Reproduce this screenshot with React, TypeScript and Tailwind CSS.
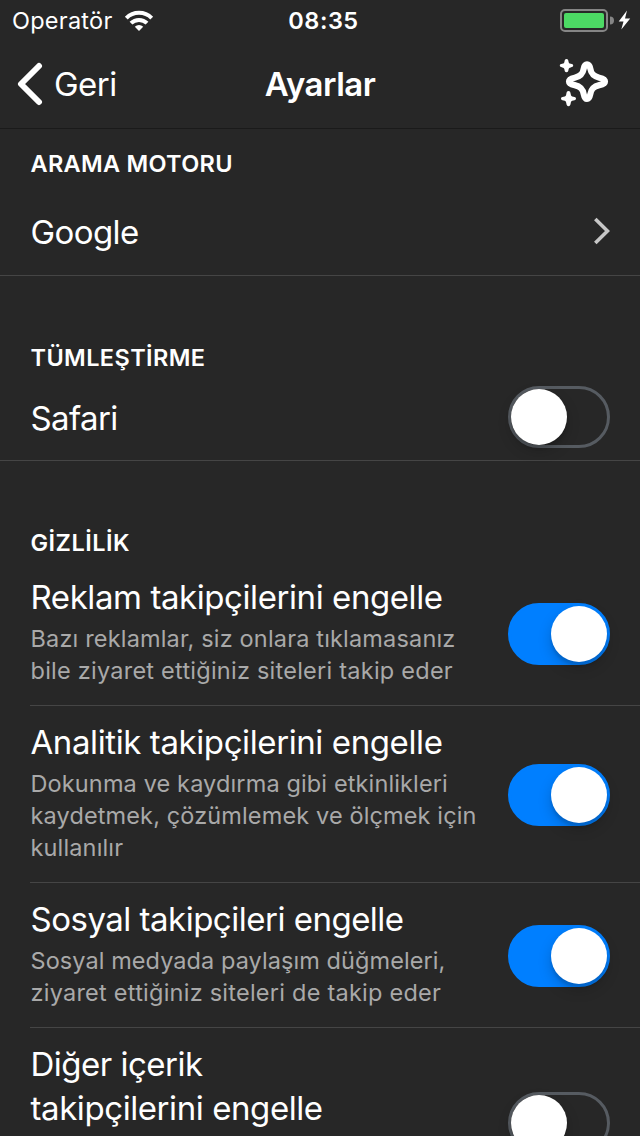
import { useState } from 'react';

function Toggle({ initial, label }: { initial: boolean; label: string }) {
  const [on, setOn] = useState(initial);
  return (
    <button
      type="button"
      role="switch"
      aria-checked={on}
      aria-label={label}
      onClick={() => setOn(!on)}
      className={`flex h-[62px] w-[102px] shrink-0 items-center rounded-full border-[3px] ${
        on ? 'justify-end border-[#007fff] bg-[#007fff]' : 'justify-start border-[#565b61]'
      }`}
    >
      <span className="size-14 rounded-full bg-white shadow-[0_6px_14px_rgba(0,0,0,0.18),0_4px_3px_rgba(0,0,0,0.1)]" />
    </button>
  );
}

function SectionTitle({ text, className }: { text: string; className: string }) {
  return <h2 className={`h-8 text-[23.5px] leading-8 font-semibold ${className}`}>{text}</h2>;
}

type Line = { text: string; tracking: string };
type PrivacyItem = { title: Line[]; description: Line[]; on: boolean };

const privacyItems: PrivacyItem[] = [
  {
    title: [{ text: 'Reklam takipçilerini engelle', tracking: 'tracking-[-0.42px]' }],
    description: [
      { text: 'Bazı reklamlar, siz onlara tıklamasanız', tracking: 'tracking-[0.17px]' },
      { text: 'bile ziyaret ettiğiniz siteleri takip eder', tracking: 'tracking-[0.24px]' },
    ],
    on: true,
  },
  {
    title: [{ text: 'Analitik takipçilerini engelle', tracking: 'tracking-[-0.4px]' }],
    description: [
      { text: 'Dokunma ve kaydırma gibi etkinlikleri', tracking: 'tracking-[0.13px]' },
      { text: 'kaydetmek, çözümlemek ve ölçmek için', tracking: 'tracking-[0.13px]' },
      { text: 'kullanılır', tracking: 'tracking-[0.15px]' },
    ],
    on: true,
  },
  {
    title: [{ text: 'Sosyal takipçileri engelle', tracking: 'tracking-[-0.5px]' }],
    description: [
      { text: 'Sosyal medyada paylaşım düğmeleri,', tracking: 'tracking-[0.07px]' },
      { text: 'ziyaret ettiğiniz siteleri de takip eder', tracking: 'tracking-[0.24px]' },
    ],
    on: true,
  },
  {
    title: [
      { text: 'Diğer içerik', tracking: 'tracking-[-0.5px]' },
      { text: 'takipçilerini engelle', tracking: 'tracking-[-0.42px]' },
    ],
    description: [],
    on: false,
  },
];

function PrivacyRow({ item }: { item: PrivacyItem }) {
  const last = item.description.length === 0;
  return (
    <li
      className={`ml-[30px] flex justify-between pr-[30px] ${
        last ? 'items-start' : 'items-center border-b border-[#454545]'
      }`}
    >
      <div className="pt-[14px] pb-[18px] pl-[0.5px] whitespace-nowrap">
        {item.title.map((line) => (
          <p key={line.text} className={`text-[33px] leading-[44px] ${line.tracking}`}>{line.text}</p>
        ))}
        <div className="mt-1 text-[23.5px] leading-8 text-[#a9a9a9]">
          {item.description.map((line) => (
            <p key={line.text} className={line.tracking}>{line.text}</p>
          ))}
        </div>
      </div>
      <div className={last ? 'pt-16' : 'pt-0.5'}>
        <Toggle initial={item.on} label={item.title.map((line) => line.text).join(' ')} />
      </div>
    </li>
  );
}

export default function App() {
  return (
    <div className="h-[1136px] w-[640px] overflow-hidden bg-[#272727] font-['Inter',sans-serif] text-white">
      <div className="grid h-[42px] grid-cols-[1fr_auto_1fr] items-center pr-2 pl-3">
        <div className="flex items-center gap-[11px]">
          <span className="text-[23.5px] leading-10 tracking-[0.25px]">Operatör</span>
          <svg width="30" height="22" viewBox="0 0 30 22" fill="none" stroke="white" strokeWidth="4">
            <path d="M2.3 8.1a18 18 0 0 1 25.4 0" />
            <path d="M7 13.2a11.3 11.3 0 0 1 16 0" />
            <path d="M15 21l-4.2-4.2a6 6 0 0 1 8.4 0z" fill="white" stroke="none" />
          </svg>
        </div>
        <span className="pl-[3px] text-center text-[23.5px] leading-10 font-semibold tracking-[0.5px]">08:35</span>
        <svg className="justify-self-end" width="72" height="24" viewBox="0 0 72 24">
          <rect x="1" y="1" width="46" height="21" rx="4" fill="none" stroke="#858585" strokeWidth="2" />
          <rect x="4" y="4" width="40" height="15" rx="2" fill="#4cd964" />
          <path d="M50 7.6a4 4 0 0 1 0 8z" fill="#858585" />
          <path d="M67 1.5L58.7 12.5h4.8L61.3 20.5 70.2 9.6h-5.2z" fill="white" />
        </svg>
      </div>

      <header className="grid h-[87px] grid-cols-[1fr_auto_1fr] items-center border-b border-[#1a1a1a] pr-[31px] pb-0.5 pl-[17px]">
        <button type="button" className="flex items-center gap-[11px] text-left">
          <svg width="26" height="44" viewBox="0 0 26 44" fill="none" stroke="white" strokeWidth="6" strokeLinecap="round" strokeLinejoin="round">
            <path d="M22 4L4 22l18 18" />
          </svg>
          <span className="text-[33px] leading-[44px] tracking-[-0.5px]">Geri</span>
        </button>
        <h1 className="pl-[14px] text-[33px] leading-[44px] font-semibold tracking-[-0.5px]">Ayarlar</h1>
        <svg className="justify-self-end" width="50" height="50" viewBox="0 0 50 50" fill="none">
          <path
            d="M28 5c-2 0-2.7 1.4-3.2 4-.9 5.2-2.8 8-9.1 9.4-3.300.7-5.700 1.600-5.700 3.700s2.400 3 5.700 3.700c6.300 1.400 8.200 4.200 9.100 9.400.5 2.600 1.200 4.500 3.200 4.500s2.700-1.900 3.200-4.500c.9-5.200 2.800-8 9.100-9.400 3.300-.7 5.700-1.600 5.700-3.700s-2.400-3-5.700-3.700c-6.300-1.400-8.200-4.200-9.100-9.400-.5-2.600-1.200-4-3.200-4z"
            transform="translate(0 .3)"
            stroke="white"
            strokeWidth="6.2"
            strokeLinejoin="round"
          />
          <path d="M7.5 0c1.500 0 1.800 1.200 2 2.500.3 1.600.7 2 2.300 2.300 1.400.2 2.400.5 2.400 1.800s-1 1.600-2.400 1.800c-1.600.3-2 .7-2.300 2.300-.2 1.300-.5 2.500-2 2.500s-1.800-1.200-2-2.500c-.3-1.600-.7-2-2.300-2.300C1.800 8.200.8 7.900.8 6.600s1-1.600 2.400-1.800c1.600-.3 2-.7 2.300-2.300.2-1.300.5-2.500 2-2.500z" fill="white" />
          <path d="M9.500 32c1.500 0 1.900 1.300 2.200 2.900.3 2 .8 2.500 2.700 2.800 1.500.2 2.600.5 2.600 1.900s-1.100 1.700-2.600 1.900c-1.900.3-2.400.8-2.700 2.800-.3 1.600-.7 2.900-2.200 2.900s-1.900-1.300-2.200-2.900c-.3-2-.8-2.500-2.700-2.800C3.100 41.300 2 41 2 39.600s1.100-1.700 2.600-1.900c1.900-.3 2.400-.8 2.700-2.800.3-1.600.7-2.900 2.200-2.900z" fill="white" />
        </svg>
      </header>

      <main>
        <section className="h-[147px] border-b border-[#454545] px-[30px] pt-[19px]">
          <SectionTitle text="ARAMA MOTORU" className="pl-[0.5px] tracking-[0.3px]" />
          <button type="button" className="mt-[30px] flex w-full items-center justify-between pl-[0.5px]">
            <span className="text-[33px] leading-[44px] tracking-[-0.6px]">Google</span>
            <svg className="mb-0.5" width="17" height="28" viewBox="0 0 17 28" fill="none" stroke="#c7c7c7" strokeWidth="3.6">
              <path d="M2.3 2L14.5 14 2.3 26" />
            </svg>
          </button>
        </section>

        <section className="h-[185px] border-b border-[#454545] px-[30px] pt-[66px]">
          <SectionTitle text="TÜMLEŞTİRME" className="pl-[0.5px] tracking-[0.4px]" />
          <div className="mt-3 flex items-center justify-between">
            <span className="pt-0.5 pl-[0.5px] text-[33px] leading-[44px] tracking-[-0.6px]">Safari</span>
            <Toggle initial={false} label="Safari" />
          </div>
        </section>

        <section className="pt-[66px]">
          <SectionTitle text="GİZLİLİK" className="ml-[30px] pl-[0.5px] tracking-[0.5px]" />
          <ul className="mt-[2px]">
            {privacyItems.map((item) => (
              <PrivacyRow key={item.title[0].text} item={item} />
            ))}
          </ul>
        </section>
      </main>
    </div>
  );
}
